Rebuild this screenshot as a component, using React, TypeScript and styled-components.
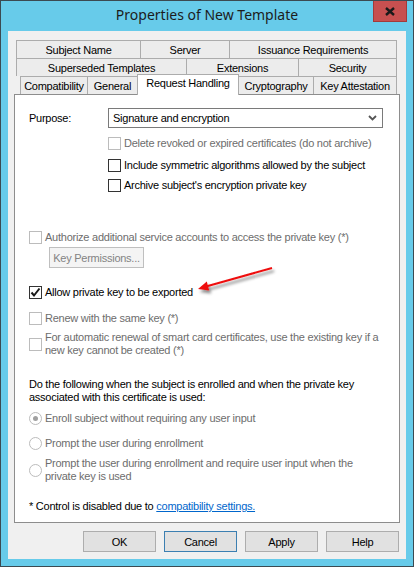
import styled, { createGlobalStyle, css } from "styled-components";

const GlobalStyle = createGlobalStyle`
  html, body {
    margin: 0;
    padding: 0;
    background: #ffffff;
  }
  * {
    box-sizing: border-box;
  }
`;

const Window = styled.div`
  width: 414px;
  height: 567px;
  background: #67cbea;
  border: 1px solid #3b4a52;
  display: flex;
  flex-direction: column;
  font-family: "Liberation Sans", Arial, sans-serif;
  font-size: 11px;
  letter-spacing: -0.25px;
  color: #000;
`;

const TitleBar = styled.div`
  height: 30px;
  display: grid;
  grid-template-columns: 1fr auto 1fr;
  align-items: start;
`;

const Title = styled.div`
  grid-column: 2;
  font-family: "Noto Sans", "Open Sans", sans-serif;
  font-size: 14px;
  letter-spacing: 0;
  line-height: 28px;
  color: #1c1c1c;
`;

const CloseButton = styled.div`
  grid-column: 3;
  justify-self: end;
  margin-right: 6px;
  width: 34px;
  height: 21px;
  background: #c75050;
  border: 1px solid #a33a3a;
  border-top: none;
  display: flex;
  align-items: center;
  justify-content: center;
`;

const Client = styled.div`
  flex: 1;
  margin: 0 7px 7px 7px;
  background: #f0f0f0;
  padding: 9px 6px 7px 6px;
  display: flex;
  flex-direction: column;
`;

const TabStrip = styled.div`
  display: flex;
  flex-direction: column;
`;

const TabRow = styled.div<{ $indent: number }>`
  display: flex;
  align-items: flex-end;
  height: 18px;
  margin-left: ${(p) => p.$indent}px;
`;

const Tab = styled.div<{ $w: number; $active?: boolean }>`
  width: ${(p) => p.$w}px;
  height: 18px;
  flex: none;
  background: #ececec;
  border-top: 1px solid #acacac;
  border-right: 1px solid #acacac;
  display: flex;
  align-items: center;
  justify-content: center;
  white-space: nowrap;
  padding-top: 1px;

  &:first-child {
    border-left: 1px solid #acacac;
  }

  ${(p) =>
    p.$active &&
    css`
      position: relative;
      z-index: 1;
      height: 21px;
      margin-bottom: -1px;
      margin-left: -1px;
      width: ${p.$w + 1}px;
      background: #ffffff;
      border-left: 1px solid #acacac;
      align-items: flex-start;
      padding-top: 2px;
    `}
`;

const Panel = styled.div`
  position: relative;
  height: 429px;
  background: #ffffff;
  border: 1px solid #8d8d8d;
  padding: 13px 14px 0 14px;
  display: flex;
  flex-direction: column;
`;

const Row = styled.div`
  display: flex;
  align-items: center;
`;

const Label = styled.span`
  width: 79px;
  flex: none;
`;

const Select = styled.div`
  width: 275px;
  height: 20px;
  border: 1px solid #7a7a7a;
  display: flex;
  align-items: center;
  justify-content: space-between;
  padding: 0 5px 0 4px;
`;

const CheckRow = styled.div<{ $top: number; $indent?: number; $disabled?: boolean }>`
  display: flex;
  align-items: center;
  gap: 3px;
  min-height: 14px;
  line-height: 13px;
  margin-top: ${(p) => p.$top}px;
  margin-left: ${(p) => p.$indent ?? 0}px;
  color: ${(p) => (p.$disabled ? "#6d6d6d" : "#000")};
`;

const Box = styled.span<{ $disabled?: boolean }>`
  width: 13px;
  height: 13px;
  flex: none;
  background: #fff;
  border: 1px solid ${(p) => (p.$disabled ? "#bcbcbc" : "#333333")};
  display: flex;
  align-items: center;
  justify-content: center;
`;

const RadioDot = styled.span<{ $disabled?: boolean; $checked?: boolean }>`
  width: 13px;
  height: 13px;
  flex: none;
  border-radius: 50%;
  background: #fff;
  border: 1px solid ${(p) => (p.$disabled ? "#bcbcbc" : "#333333")};
  display: flex;
  align-items: center;
  justify-content: center;

  &::after {
    content: "";
    width: 5px;
    height: 5px;
    border-radius: 50%;
    background: ${(p) => (p.$checked ? "#a0a0a0" : "transparent")};
  }
`;

const Text = styled.span`
  max-width: 340px;
`;

const SmallButton = styled.div`
  width: 95px;
  height: 21px;
  margin-top: 3px;
  margin-left: 20px;
  background: #f4f4f4;
  border: 1px solid #bfbfbf;
  color: #838383;
  display: flex;
  align-items: center;
  justify-content: center;
`;

const Paragraph = styled.div<{ $top: number }>`
  margin-top: ${(p) => p.$top}px;
  line-height: 13px;
  width: 345px;
`;

const Link = styled.a`
  color: #0066cc;
  text-decoration: underline;
`;

const Arrow = styled.svg`
  position: absolute;
  left: 175px;
  top: 165px;
  overflow: visible;
`;

const ButtonBar = styled.div`
  display: flex;
  justify-content: flex-end;
  gap: 8px;
  margin-top: 8px;
  padding-right: 1px;
`;

const Button = styled.div<{ $focused?: boolean }>`
  width: 73px;
  height: 21px;
  background: #e1e1e1;
  border: 1px solid ${(p) => (p.$focused ? "#3c7fb1" : "#adadad")};
  display: flex;
  align-items: center;
  justify-content: center;
`;

const rows = [
  [
    { label: "Subject Name", w: 125 },
    { label: "Server", w: 89 },
    { label: "Issuance Requirements", w: 167 },
  ],
  [
    { label: "Superseded Templates", w: 171 },
    { label: "Extensions", w: 112 },
    { label: "Security", w: 98 },
  ],
  [
    { label: "Compatibility", w: 68 },
    { label: "General", w: 50 },
    { label: "Request Handling", w: 101, active: true },
    { label: "Cryptography", w: 75 },
    { label: "Key Attestation", w: 83 },
  ],
];

const Check = () => (
  <svg width="11" height="11" viewBox="0 0 11 11">
    <path d="M1.5 5.5 L4 8.5 L9.5 1.5" fill="none" stroke="#1a1a1a" strokeWidth="2" />
  </svg>
);

const Checkbox = ({
  children,
  top,
  indent,
  disabled,
  checked,
}: {
  children: React.ReactNode;
  top: number;
  indent?: number;
  disabled?: boolean;
  checked?: boolean;
}) => (
  <CheckRow $top={top} $indent={indent} $disabled={disabled}>
    <Box $disabled={disabled}>{checked && <Check />}</Box>
    <Text>{children}</Text>
  </CheckRow>
);

const Radio = ({
  children,
  top,
  checked,
}: {
  children: React.ReactNode;
  top: number;
  checked?: boolean;
}) => (
  <CheckRow $top={top} $disabled>
    <RadioDot $disabled $checked={checked} />
    <Text>{children}</Text>
  </CheckRow>
);

export default function App() {
  return (
    <>
      <GlobalStyle />
      <Window>
        <TitleBar>
          <Title>Properties of New Template</Title>
          <CloseButton>
            <svg width="10" height="9" viewBox="0 0 10 9">
              <path d="M1 1 L9 8 M9 1 L1 8" stroke="#1a1a1a" strokeWidth="2.4" />
            </svg>
          </CloseButton>
        </TitleBar>
        <Client>
          <TabStrip>
            {rows.map((row, i) => (
              <TabRow key={i} $indent={i === 2 ? 6 : 2}>
                {row.map((t) => (
                  <Tab key={t.label} $w={t.w} $active={t.active}>
                    {t.label}
                  </Tab>
                ))}
              </TabRow>
            ))}
          </TabStrip>
          <Panel>
            <Row>
              <Label>Purpose:</Label>
              <Select>
                <span>Signature and encryption</span>
                <svg width="9" height="6" viewBox="0 0 9 6">
                  <path d="M1 1 L4.5 4.5 L8 1" fill="none" stroke="#555" strokeWidth="1.8" />
                </svg>
              </Select>
            </Row>
            <Checkbox top={8} indent={79} disabled>
              Delete revoked or expired certificates (do not archive)
            </Checkbox>
            <Checkbox top={8} indent={79}>
              Include symmetric algorithms allowed by the subject
            </Checkbox>
            <Checkbox top={6} indent={79}>
              Archive subject's encryption private key
            </Checkbox>

            <Checkbox top={38} disabled>
              Authorize additional service accounts to access the private key (*)
            </Checkbox>
            <SmallButton>Key Permissions...</SmallButton>

            <Checkbox top={17} checked>
              Allow private key to be exported
            </Checkbox>
            <Checkbox top={12} disabled>
              Renew with the same key (*)
            </Checkbox>
            <Checkbox top={6} disabled>
              For automatic renewal of smart card certificates, use the existing key if a new key
              cannot be created (*)
            </Checkbox>

            <Paragraph $top={21}>
              Do the following when the subject is enrolled and when the private key associated
              with this certificate is used:
            </Paragraph>
            <Radio top={7} checked>
              Enroll subject without requiring any user input
            </Radio>
            <Radio top={11}>Prompt the user during enrollment</Radio>
            <Radio top={7}>
              Prompt the user during enrollment and require user input when the private key is used
            </Radio>

            <Paragraph $top={17}>
              * Control is disabled due to <Link>compatibility settings.</Link>
            </Paragraph>

            <Arrow width="90" height="35" viewBox="0 0 90 35">
              <defs>
                <filter id="shadow" x="-20%" y="-50%" width="140%" height="200%">
                  <feDropShadow dx="2" dy="3" stdDeviation="1.5" floodColor="#000" floodOpacity="0.45" />
                </filter>
              </defs>
              <g filter="url(#shadow)">
                <line x1="82" y1="8" x2="16" y2="26.5" stroke="#ee1111" strokeWidth="2" />
                <polygon points="8,29 19.2,30.6 16.8,21.6" fill="#ee1111" />
              </g>
            </Arrow>
          </Panel>
          <ButtonBar>
            <Button>OK</Button>
            <Button $focused>Cancel</Button>
            <Button>Apply</Button>
            <Button>Help</Button>
          </ButtonBar>
        </Client>
      </Window>
    </>
  );
}
